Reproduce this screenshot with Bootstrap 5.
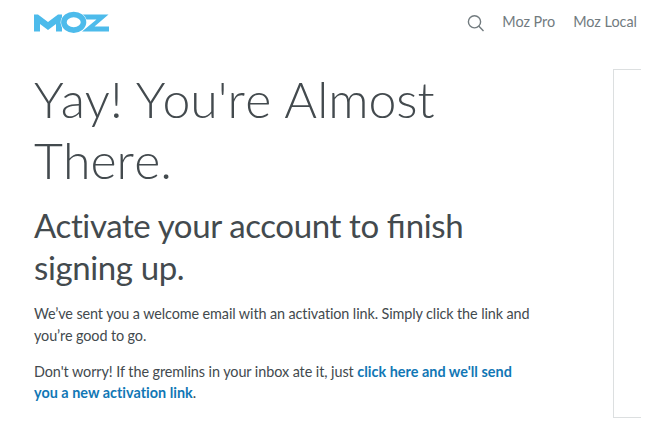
<!DOCTYPE html>
<html lang="en">
<head>
<meta charset="utf-8">
<meta name="viewport" content="width=device-width, initial-scale=1">
<title>Moz</title>
<link href="https://cdn.jsdelivr.net/npm/bootstrap@5.3.0/dist/css/bootstrap.min.css" rel="stylesheet">
<style>
body{font-family:Lato,"Liberation Sans",sans-serif;color:#434a4e;background:#fff;font-size:14.4px;line-height:21.6px;height:422px;overflow:hidden}
.top{height:46px;padding:0 10px 0 34px}
.top a{color:#727b7f;font-size:14.4px;line-height:20px;margin-top:-3px}
.logo{width:76px;height:23px;margin-top:-1px}
.links{gap:18px}
.main-area{padding:23px 6px 0 34px}
.copy{width:510px}
h1{font-weight:300;font-size:50px;line-height:61px;margin:0 0 13px;font-kerning:none;word-spacing:-.5px;color:#434a4e}
h1 .tight{letter-spacing:-3.100px}
h2{font-weight:400;font-size:33px;line-height:42px;margin:0 0 15px;letter-spacing:-.38px}
h2 .joined{letter-spacing:0;font-variant-ligatures:common-ligatures}
.copy p{margin:0 0 14.400px;letter-spacing:-.1px}
.copy p a{color:#1177b5;font-weight:700;letter-spacing:.02px}
.copy .lead-in{letter-spacing:-.07px}
.panel{width:28px;height:349px;border:1px solid #dcdfe0;border-right:0}
</style>
</head>
<body>
<nav class="top d-flex justify-content-between align-items-center">
<svg class="logo" viewBox="0 0 76 23" fill="#4dbbeb"><path d="M0 3.500H4L14 11L24 3.500H28V20.500H22V13L14 19L6 13V20.500H0Z"/><path d="M49 3.500H74.500L60.500 15.500H75V20.500H48L62.500 8.500H49Z"/><ellipse cx="39.700" cy="11.300" rx="13.100" ry="11.200" fill="#fff"/><ellipse cx="39.700" cy="11.300" rx="9.800" ry="7.800" fill="none" stroke="#4dbbeb" stroke-width="5.600"/></svg>
<div class="links d-flex align-items-center">
<svg width="17" height="17" viewBox="0 0 17 17" fill="none" stroke="#727b7f" stroke-width="1.400"><circle cx="7.500" cy="6.800" r="6.100"/><path d="M11.700 11L16.500 16"/></svg>
<a class="text-decoration-none" href="#">Moz Pro</a>
<a class="text-decoration-none" href="#">Moz Local</a>
</div>
</nav>
<main class="main-area d-flex justify-content-between">
<section class="copy">
<h1><span class="tight">Y</span>ay! <span class="tight">Y</span>ou're Almost<br>There.</h1>
<h2>Activate your account to <span class="joined">fi</span>nish<br>signing up.</h2>
<p>We’ve sent you a welcome email with an activation link. Simply click the link and<br>you’re good to go.</p>
<p><span class="lead-in">Don't worry! If the gremlins in your inbox ate it, just </span><a class="text-decoration-none" href="#">click here and we'll send<br>you a new activation link</a>.</p>
</section>
<aside class="panel"></aside>
</main>
<script src="https://cdn.jsdelivr.net/npm/bootstrap@5.3.0/dist/js/bootstrap.bundle.min.js"></script>
</body>
</html>
